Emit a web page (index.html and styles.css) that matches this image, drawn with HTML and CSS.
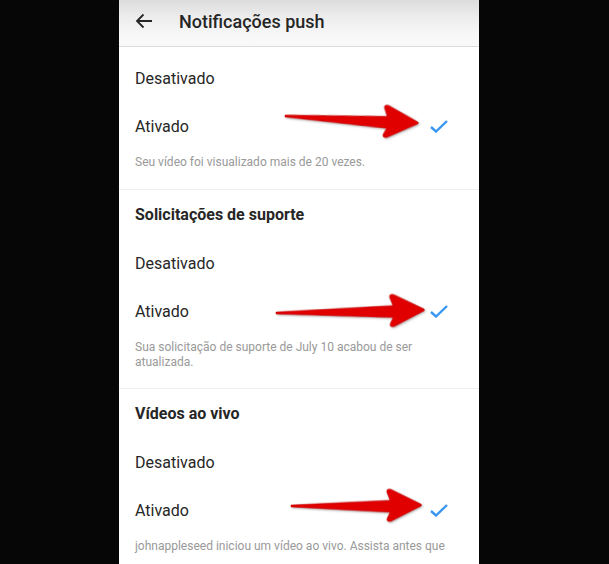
FILE: index.html
```html
<!DOCTYPE html>
<html lang="pt">
<head>
<meta charset="utf-8">
<title>Notificações push</title>
<link rel="stylesheet" href="styles.css">
</head>
<body>
<div class="screen">
  <header class="topbar">
    <svg class="back" width="18" height="16" viewBox="0 0 18 16"><path d="M17 8H2M8.5 1.5L2 8l6.5 6.5" fill="none" stroke="#262626" stroke-width="1.8"/></svg>
    <h1 class="title">Notificações push</h1>
  </header>

  <section class="group first">
    <div class="option">Desativado</div>
    <div class="option"><span>Ativado</span><svg class="check" width="18" height="13" viewBox="0 0 18 13"><path d="M1 7l5 4.5L17 1" fill="none" stroke="#3897f0" stroke-width="2.4"/></svg></div>
    <p class="caption">Seu vídeo foi visualizado mais de 20 vezes.</p>
  </section>

  <section class="group second">
    <h2 class="group-title">Solicitações de suporte</h2>
    <div class="option">Desativado</div>
    <div class="option"><span>Ativado</span><svg class="check" width="18" height="13" viewBox="0 0 18 13"><path d="M1 7l5 4.5L17 1" fill="none" stroke="#3897f0" stroke-width="2.4"/></svg></div>
    <p class="caption">Sua solicitação de suporte de July 10 acabou de ser atualizada.</p>
  </section>

  <section class="group last">
    <h2 class="group-title">Vídeos ao vivo</h2>
    <div class="option">Desativado</div>
    <div class="option"><span>Ativado</span><svg class="check" width="18" height="13" viewBox="0 0 18 13"><path d="M1 7l5 4.5L17 1" fill="none" stroke="#3897f0" stroke-width="2.4"/></svg></div>
    <p class="caption">johnappleseed iniciou um vídeo ao vivo. Assista antes que</p>
  </section>

  <svg class="arrows" width="360" height="564" viewBox="0 0 360 564">
    <g class="arrow" transform="translate(166,116) rotate(3)">
      <path d="M0,-1 L102,-5 L99,-13 Q98,-17 103,-16 L133,-1 Q134,0 133,1 L103,16 Q98,17 99,13 L102,7 L0,1 Z"/>
    </g>
    <g class="arrow" transform="translate(157,313) rotate(-1.2)">
      <path d="M0,-1 L117,-5 L114,-13 Q113,-17 118,-16 L148,-1 Q149,0 148,1 L118,16 Q113,17 114,13 L117,7 L0,1 Z"/>
    </g>
    <g class="arrow" transform="translate(172,506) rotate(-0.4)">
      <path d="M0,-1 L99,-5 L96,-13 Q95,-17 100,-16 L130,-1 Q131,0 130,1 L100,16 Q95,17 96,13 L99,7 L0,1 Z"/>
    </g>
  </svg>
</div>
</body>
</html>
```

FILE: styles.css
```css
html, body {
  margin: 0;
  padding: 0;
  background: #060606;
}
body {
  font-family: Roboto, "Liberation Sans", Arial, sans-serif;
  color: #262626;
}
.screen {
  position: relative;
  width: 360px;
  height: 564px;
  margin: 0 0 0 119px;
  background: #ffffff;
  overflow: hidden;
}
.topbar {
  border-bottom: 1px solid #dcdcdc;
  background: linear-gradient(#dcdcdc 0%, #ececec 35%, #f7f7f7 75%, #f9f9f9 100%);
  display: flex;
  align-items: center;
  padding: 0 0 4px 16px;
  height: 42px;
}
.back {
  display: block;
  margin-right: 26px;
}
.title {
  margin: 0;
  font-size: 18px;
  font-weight: 500;
  color: #262626;
}
.group {
  border-bottom: 1px solid #efefef;
  padding-bottom: 19px;
}
.group.first {
  padding-top: 7px;
}
.group.second {
  padding-bottom: 18px;
}
.group.last {
  border-bottom: none;
}
.group-title {
  margin: 0;
  height: 49px;
  display: flex;
  align-items: center;
  padding: 0 16px;
  font-size: 16px;
  font-weight: 700;
  color: #262626;
}
.option {
  height: 48px;
  display: flex;
  align-items: center;
  justify-content: space-between;
  padding: 0 31px 0 16px;
  font-size: 16px;
  color: #262626;
}
.check {
  display: block;
}
.caption {
  margin: 5px 0 0;
  padding: 0 16px;
  font-size: 12px;
  line-height: 15px;
  color: #999999;
}
.arrows {
  position: absolute;
  left: 0;
  top: 0;
  pointer-events: none;
}
.arrow path {
  fill: #e00000;
  stroke: #c00000;
  stroke-width: 0.5;
  filter: drop-shadow(1px 1px 0.8px rgba(0,0,0,0.3));
}
```
